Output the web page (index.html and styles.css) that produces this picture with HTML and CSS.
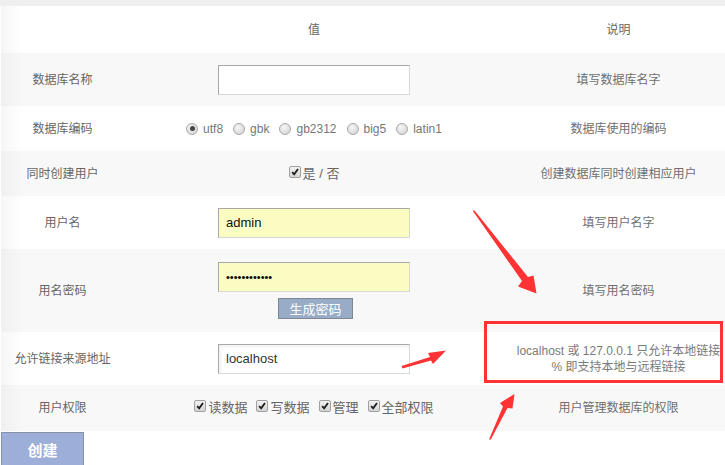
FILE: index.html
```html
<!DOCTYPE html>
<html lang="zh-CN">
<head>
<meta charset="utf-8">
<title>创建数据库</title>
<link rel="stylesheet" href="styles.css">
</head>
<body>
<div class="page">
  <div class="topbar"></div>
  <div class="table">
    <div class="row white r47">
      <div class="cell"></div>
      <div class="cell">值</div>
      <div class="cell">说明</div>
    </div>
    <div class="row gray r53">
      <div class="cell">数据库名称</div>
      <div class="cell"><input class="field" type="text"></div>
      <div class="cell desc">填写数据库名字</div>
    </div>
    <div class="row white r45">
      <div class="cell">数据库编码</div>
      <div class="cell">
        <div class="opts">
          <label class="opt"><span class="radio on"></span>utf8</label>
          <label class="opt"><span class="radio"></span>gbk</label>
          <label class="opt"><span class="radio"></span>gb2312</label>
          <label class="opt"><span class="radio"></span>big5</label>
          <label class="opt"><span class="radio"></span>latin1</label>
        </div>
      </div>
      <div class="cell desc">数据库使用的编码</div>
    </div>
    <div class="row gray r45">
      <div class="cell">同时创建用户</div>
      <div class="cell">
        <label class="chk"><span class="box"><svg viewBox="0 0 12 12"><path d="M2.6 6.2 L5 8.8 L9.6 2.4"/></svg></span>是 / 否</label>
      </div>
      <div class="cell desc">创建数据库同时创建相应用户</div>
    </div>
    <div class="row white r53">
      <div class="cell">用户名</div>
      <div class="cell"><input class="field auto" type="text" value="admin"></div>
      <div class="cell desc">填写用户名字</div>
    </div>
    <div class="row gray r83">
      <div class="cell">用名密码</div>
      <div class="cell stack">
        <input class="field auto pw" type="password" value="abcdefghijkl">
        <button class="gen" type="button">生成密码</button>
      </div>
      <div class="cell desc">填写用名密码</div>
    </div>
    <div class="row white r53">
      <div class="cell">允许链接来源地址</div>
      <div class="cell"><input class="field shade" type="text" value="localhost"></div>
      <div class="cell desc two">localhost 或 127.0.0.1 只允许本地链接<br>% 即支持本地与远程链接</div>
    </div>
    <div class="row gray r46">
      <div class="cell">用户权限</div>
      <div class="cell">
        <div class="opts wide">
          <label class="chk"><span class="box"><svg viewBox="0 0 12 12"><path d="M2.6 6.2 L5 8.8 L9.6 2.4"/></svg></span>读数据</label>
          <label class="chk"><span class="box"><svg viewBox="0 0 12 12"><path d="M2.6 6.2 L5 8.8 L9.6 2.4"/></svg></span>写数据</label>
          <label class="chk"><span class="box"><svg viewBox="0 0 12 12"><path d="M2.6 6.2 L5 8.8 L9.6 2.4"/></svg></span>管理</label>
          <label class="chk"><span class="box"><svg viewBox="0 0 12 12"><path d="M2.6 6.2 L5 8.8 L9.6 2.4"/></svg></span>全部权限</label>
        </div>
      </div>
      <div class="cell desc">用户管理数据库的权限</div>
    </div>
  </div>
  <div class="actions"><button class="create" type="button">创建</button></div>

  <div class="redbox"></div>
  <svg class="marks" viewBox="0 0 725 465" width="725" height="465">
    <polygon points="472.5,210.5 474.5,210.5 528,277 533.5,275.5 536.5,293.5 518,286.5 522,281"/>
    <polygon points="401.5,366 402.5,368.5 431,360.5 433,364 446,350.5 428,353 430,357"/>
    <polygon points="489,439.5 490.8,439.5 507.5,408 512.5,408.5 514.5,394 500,403 503,406.5"/>
  </svg>
</div>
</body>
</html>
```

FILE: styles.css
```css
html, body {
  margin: 0;
  padding: 0;
  background: #fff;
  overflow: hidden;
}

.page {
  position: relative;
  width: 725px;
  height: 465px;
  overflow: hidden;
  font-family: "Liberation Sans", "Noto Sans CJK SC", sans-serif;
  font-size: 12px;
  color: #666;
}

.topbar {
  height: 6px;
  background: #efefef;
}

.table {
  position: relative;
  width: 732px;
  margin-left: 1px;
}

.table::before {
  content: "";
  position: absolute;
  left: 0;
  top: 0;
  bottom: 0;
  width: 22px;
  background: linear-gradient(to right, rgba(0, 0, 0, 0.035), rgba(0, 0, 0, 0));
  pointer-events: none;
}

.row {
  display: grid;
  grid-template-columns: 123px 380px 229px;
  align-items: center;
}

.white { background: #fff; }
.gray { background: #f8f8f8; }

.r45 { height: 45px; }
.r46 { height: 46px; }
.r47 { height: 47px; }
.r53 { height: 53px; }
.r83 { height: 83px; }

.cell {
  display: flex;
  justify-content: center;
  align-items: center;
  text-align: center;
  line-height: 16px;
}

.desc { color: #6f6f6f; }

.two { color: #7a7a7a; }

.stack {
  flex-direction: column;
}

.field {
  box-sizing: border-box;
  width: 192px;
  height: 30px;
  margin: 0;
  padding: 0 7px;
  border: 1px solid #a8a8a8;
  border-right-color: #d8d8d8;
  border-bottom-color: #d8d8d8;
  background: #fff;
  font-family: "Liberation Sans", sans-serif;
  font-size: 13px;
  color: #111;
  outline: none;
}

.field.auto {
  background: #fafcc2;
}

.field.pw {
  font-size: 11px;
  color: #000;
}

.field.shade {
  box-shadow: inset 2px 2px 3px rgba(0, 0, 0, 0.06);
  color: #333;
}

.gen {
  width: 75px;
  height: 21px;
  margin-top: 6px;
  margin-left: 3px;
  padding: 0;
  border: 1px solid #7e8794;
  background: #98abc7;
  color: #fff;
  font-family: "Noto Sans CJK SC", sans-serif;
  font-size: 13px;
  line-height: 19px;
}

.opts {
  display: flex;
  align-items: center;
  gap: 10px;
}

.opts.wide {
  gap: 9px;
}

.opt {
  display: flex;
  align-items: center;
  font-family: "Liberation Sans", sans-serif;
  font-size: 12px;
  color: #777;
}

.radio {
  box-sizing: border-box;
  width: 12px;
  height: 12px;
  margin-right: 5px;
  border: 1px solid #a9a9a9;
  border-radius: 50%;
  background: radial-gradient(circle at 40% 35%, #f6f6f6, #cfcfcf);
  position: relative;
}

.radio.on::after {
  content: "";
  position: absolute;
  left: 2.5px;
  top: 2.5px;
  width: 5px;
  height: 5px;
  border-radius: 50%;
  background: #444;
}

.chk {
  display: flex;
  align-items: center;
  font-size: 13px;
  color: #666;
}

.box {
  box-sizing: border-box;
  width: 12px;
  height: 12px;
  margin-right: 2px;
  border: 1px solid #a0a0a0;
  border-radius: 2px;
  background: linear-gradient(#f2f2f2, #d4d4d4);
  display: flex;
  position: relative;
  top: -2px;
}

.box svg {
  width: 10px;
  height: 10px;
}

.box path {
  fill: none;
  stroke: #1e1e1e;
  stroke-width: 2.2;
}

.actions {
  padding-top: 1px;
  padding-left: 1px;
}

.create {
  width: 83px;
  height: 34px;
  padding: 0;
  border: 1px solid #8592a8;
  background: #9daed9;
  color: #fff;
  font-family: "Noto Sans CJK SC", sans-serif;
  font-size: 15px;
  font-weight: bold;
}

.redbox {
  position: absolute;
  left: 484px;
  top: 321px;
  width: 233px;
  height: 56px;
  border: 3px solid #f33;
  pointer-events: none;
}

.marks {
  position: absolute;
  left: 0;
  top: 0;
  pointer-events: none;
}

.marks polygon {
  fill: #f33;
}
```
